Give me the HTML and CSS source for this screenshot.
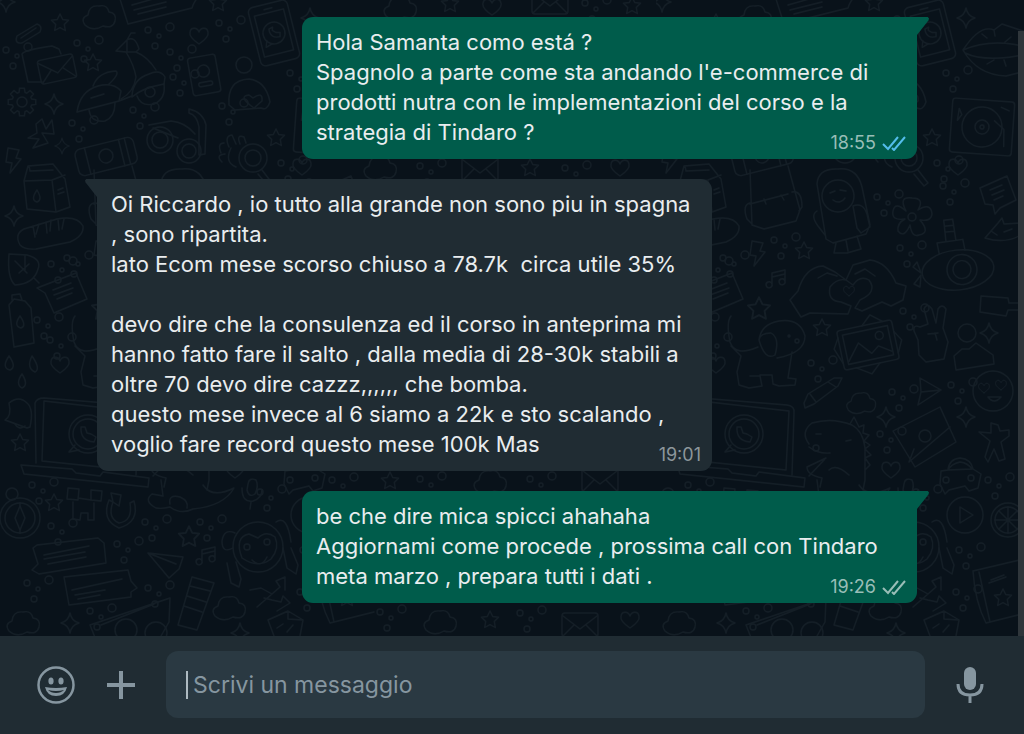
FILE: index.html
```html
<!DOCTYPE html>
<html lang="it">
  <head>
    <meta charset="UTF-8" />
    <meta name="viewport" content="width=device-width, initial-scale=1.0" />
    <title>Chat</title>
    <link rel="stylesheet" href="styles.css">
  </head>
  <body>
    <main class="chat">
      <svg class="wallpaper" aria-hidden="true">
        <defs>
          <path id="star" d="M0-9 2.700-3.500 8.500-2.800 4.300 1.500 5.300 7.500 0 4.700-5.300 7.500-4.300 1.500-8.500-2.800-2.700-3.500Z" />
          <path id="spark" d="M0-10Q1.500-2 9 0Q1.500 2 0 10Q-1.500 2-9 0Q-1.500-2 0-10Z" />
          <path id="heart" d="M0 8C-6 4-10 0-9-4C-8-9-2-9 0-4C2-9 8-9 9-4C10 0 6 4 0 8Z" />
          <path id="bolt" d="M-5-12 6-10 3-2 8-1-3 13-1 3-7 2Z" />
          <path id="note" d="M-6 6V-5L7-8V3M-6-1 7-4M-6 6a3 3 0 1 1-4-2q3-1 4 2M7 3a3 3 0 1 1-4-2q3-1 4 2" />
          <path id="cloud" d="M-14 8Q-19 1-11-2Q-10-12 0-11Q8-13 10-5Q18-4 16 4Q14 12 4 9Q-6 15-14 8Z" />
          <path id="gear" d="M13.800-2.400V2.400L9.600 3 8.800 4.700 11.500 8 8 11.500 4.700 8.800 3 9.600 2.400 13.800H-2.400L-3 9.600-4.700 8.800-8 11.500-11.500 8-8.800 4.700-9.600 3-13.800 2.400V-2.400L-9.600-3-8.800-4.700-11.500-8-8-11.500-4.700-8.800-3-9.600-2.400-13.800H2.400L3-9.600 4.700-8.800 8-11.500 11.500-8 8.800-4.700 9.600-3Z" />
          <g id="bubbles">
            <circle cx="0" cy="0" r="3" /><circle cx="11" cy="6" r="2" />
            <circle cx="22" cy="-3" r="4" /><circle cx="7" cy="16" r="3" />
          </g>
          <g id="letter"><rect x="-18" y="-12" width="36" height="24" rx="3" /><path d="M-17-9 0 4 17-9M-17 11-6 0M17 11 6 0" /></g>
          <pattern id="doodles" width="656" height="640" patternUnits="userSpaceOnUse">
            <g class="doodle">
              <!-- first row -->
              <use href="#spark" x="6" y="2" />
              <use href="#star" x="60" y="23" />
              <use href="#cloud" x="99" y="17" />
              <path d="M119-4 128 24 192 8Q195-2 202-5M132 5 160-3M134 10 166 2M138 14 166 7" />
              <use href="#star" x="218" y="3" />
              <path d="M17 36 37 24Q43 26 40 32L22 43Q14 44 17 36ZM21 38 36 28" />
              <path d="M42 82 28 82 22 54Q24 50 52 46L59 49 61 54" />
              <use href="#letter" transform="translate(57 69) rotate(-12)" />
              <use href="#star" x="93" y="63" />
              <path d="M77 112Q80 91 98 86Q113 82 121 91L119 101 77 112ZM93 86Q98 72 116 71Q120 74 108 85M91 98 104 94M121 99Q134 92 136 77 134 65 126 52L116 51 127 40 131 33 135 33M127 40Q135 35 139 49L136 52 127 52ZM136 52Q148 57 156 70M119 101 132 96Q133 79 149 74 160 69 165 77L164 84Q142 88 132 97" />
              <path d="M89 110Q91 123 105 121 115 117 115 103M137 96Q141 107 154 104 166 99 164 84" />
              <circle cx="150" cy="92" r="5" />
              <use href="#heart" x="199" y="36" />
              <g transform="translate(204 74) rotate(-10)"><rect x="-14" y="-18" width="28" height="38" rx="3" /><circle cy="-3" r="6" /><rect x="-7" y="8" width="14" height="4" rx="2" /></g>
              <g transform="translate(274 33) rotate(-14)"><rect x="-20" y="-30" width="40" height="60" rx="5" /><rect x="-15" y="-21" width="30" height="42" /><circle r="11" /><path d="M-9 6-11 12-4 10M-4-5Q-5 5 5 5L6 1 2 0-1-3 0-6ZM-4-25H4" /></g>
              <circle cx="244" cy="65" r="8" />
              <path d="M229 105Q227 80 249 79 266 81 270 102 267 111 261 108L235 110ZM254 108Q237 96 249 95L253 98Q263 91 262 101Z" />
              <use href="#spark" x="310" y="18" />
              <path d="M307 50Q324 24 338 30L346 24 370 32M307 50Q337 37 374 48M307 50Q321 75 350 76L374 70M309 53Q330 63 372 54M331 38 326 34M339 36 338 30M349 42 355 37M338 60 331 64M348 60 350 66" />
              <use href="#gear" x="22" y="102" />
              <circle cx="22" cy="102" r="5" />
              <use href="#spark" x="54" y="104" />
              <path d="M36 124 42 119 46 129 52 120 54 134 42 133 48 143 33 148 39 139 28 138 37 133Z" />
              <use href="#spark" transform="translate(62 146) scale(.8)" />
              <g transform="translate(106 156) rotate(-14)"><rect x="-30" y="-13" width="60" height="27" rx="6" /><circle r="7" /><path d="M-19-13V14M16-13V14M22-13V14" /></g>
              <circle cx="160" cy="140" r="13" /><circle cx="160" cy="140" r="8" />
              <circle cx="189" cy="151" r="12" /><circle cx="189" cy="151" r="7" />
              <path d="M149 125 171 121Q185 122 195 134M153 128 178 138M189 109Q203 112 206 125L205 154 199 155V127Q197 115 189 113Z" />
              <circle cx="253" cy="158" r="14" /><circle cx="253" cy="158" r="8" />
              <path d="M262 170 272 183 268 186 258 174M231 148Q224 162 236 167M221 153Q217 143 224 143M229 147Q224 136 232 135L236 144M240 144Q236 134 244 137L246 143M222 162Q215 155 225 154" />
              <use href="#star" x="276" y="138" />
              <g transform="translate(326 127) rotate(4)"><rect x="-31" y="-27" width="62" height="54" rx="3" /><circle r="20" /><circle r="7" /><circle r="2" /><path d="M12-7 22 1 23 18M-24-17-21-11-25-5ZM18-21 26-18" /></g>
              <!-- second row -->
              <use href="#bolt" x="13" y="160" />
              <path d="M24 181 28 166 53 164 65 179 70 207 56 212 27 209ZM24 181 52 180 65 175M52 180 56 212M29 166 30 171 53 170M37 190Q30 200 37 202 43 200 37 190M58 190 63 188M58 194 64 192" />
              <use href="#spark" x="14" y="216" />
              <path d="M20 245Q14 234 24 229L57 219Q77 215 83 226 84 236 70 242L36 249Q25 250 20 245ZM33 226 35 237M39 224 36 234M46 222 47 233M51 220 50 231M58 219 59 230M64 219 62 229" />
              <path d="M94 170 96 225 108 229 140 221 144 210 132 166M94 204 132 194M108 199 110 204M125 195 128 200M94 203Q86 205 91 219L96 224M136 192Q146 190 146 207L143 211" />
              <path d="M170 239 161 184Q162 168 182 169 201 167 206 187L214 225 210 234 177 243ZM161 211Q154 215 162 226L169 235M197 206Q207 202 211 214L214 227 205 233 201 228ZM180 243 178 253 191 253 205 249 201 236M190 240 192 251" />
              <circle cx="182" cy="196" r="16" />
              <path d="M174 193 179 191M184 190 190 191M177 200Q184 205 189 198" />
              <path d="M250 211Q242 196 256 198 269 198 262 210 275 202 276 214 275 222 264 220 275 233 263 235 256 238 254 225 248 239 242 231 241 223 249 219 235 221 237 211 239 201 250 211" />
              <circle cx="256" cy="217" r="4" />
              <use href="#heart" x="302" y="167" />
              <path d="M324 188 351 176 360 200 344 208 339 214 337 205 329 204ZM334 190 346 185M336 195 348 190M338 200 347 196" />
              <path d="M329 238 342 223 346 218 348 224 365 223M329 238Q348 244 363 236M335 231 341 235M348 232 356 229" />
              <g transform="translate(302 270) rotate(-6)"><ellipse rx="36" ry="20" /><circle cx="4" r="15" /><circle cx="4" r="9" /><path d="M-17-18-18-29 8-30 9-19M-9-30-9-51 0-51 1-30M-9-45H0M-9-39H0" /></g>
              <path d="M265 273 257 267 261 262ZM265 275 258 284 264 287Z" />
              <path d="M9 254 27 255Q42 259 38 269 34 284 15 285 7 278 9 254ZM15 261 27 273M19 273 29 264M34 278 39 283M25 255 25 270" />
              <path d="M37 288 76 273 87 299 54 313 45 293ZM53 290 71 283M54 295 73 288M57 299 72 293" />
              <use href="#bolt" x="101" y="253" />
              <use href="#star" x="148" y="251" />
              <use href="#note" x="122" y="278" />
              <path d="M145 317 134 300 142 291Q149 267 167 266L179 272 190 280 197 265 214 260Q231 262 240 283L250 286 247 300 235 306 226 302 206 311 199 308 204 300Q222 292 213 280 204 275 197 285L190 280Q181 278 174 287 171 301 185 302L195 306 192 314 154 313ZM162 278 171 273 181 276M199 274 209 269 219 276" />
              <use href="#heart" transform="translate(193 291) scale(.6)" />
              <use href="#star" transform="translate(103 309) scale(1.300)" />
              <use href="#star" x="166" y="328" />
              <path d="M9 305 14 299 25 301 31 308 34 343 14 347ZM12 300 12 295 20 294 22 300M20 316Q13 326 21 328 27 326 20 316" />
              <path d="M9 356Q1 368 10 370 17 367 9 356M32 356Q26 368 35 372 41 369 32 356M22 374Q15 384 22 388 29 385 22 374" />
              <use href="#heart" x="60" y="365" />
              <path d="M75 316Q70 322 74 342 79 357 102 347M75 346 85 356 81 372 83 385 93 388 106 386 104 376 94 376M104 375 116 375 117 384 123 386 139 385 140 379 132 378 136 352M103 340Q105 324 123 321 144 318 149 336 149 353 121 358M103 340Q104 333 115 333 124 338 119 355 109 361 103 340" />
              <circle cx="133" cy="336" r="1" /><circle cx="141" cy="341" r="2" />
              <g transform="translate(212 345) rotate(-12)"><rect x="-28" y="-20" width="56" height="40" rx="3" /><rect x="-23" y="-15" width="46" height="30" /><circle cx="13" cy="-7" r="4" /><path d="M-22 12-9-4 2 9 10 3 22 11M-2-20 8-29 19-20M-28-13-34-3-28 13M28-8 34 2 28 14M-16 20-2 29 8 20" /></g>
              <path d="M262 340 258 331Q257 324 264 327L272 324 268 309Q271 302 276 309L280 323 282 309Q286 303 290 309L287 328 292 342 288 359 270 362 263 355ZM272 334 282 333M281 340 279 333" />
              <circle cx="311" cy="333" r="9" />
              <path d="M300 370 298 356 306 349 313 349 320 343 337 355 338 364Z" />
              <path d="M325 296 352 298 353 303 365 303M324 312 350 316 352 310 365 310M325 296 324 312" />
              <use href="#spark" x="333" y="333" />
              <circle cx="337" cy="391" r="20" />
              <use href="#heart" transform="translate(328 388) scale(.6)" /><use href="#heart" transform="translate(345 385) scale(.6)" />
              <path d="M332 397Q338 405 345 397Z" />
              <!-- third row -->
              <path d="M264 378 285 390 262 405 265 392ZM265 392 285 390M148 403 152 394 178 378 186 378 182 386 158 404 149 408ZM154 394 160 402M172 382 180 387" />
              <use href="#cloud" transform="translate(205 403) scale(.9)" />
              <path d="M5 420Q12 416 9 403 19 395 27 403 34 409 30 427L27 428ZM14 423Q19 431 25 426" />
              <use href="#star" x="20" y="443" />
              <path d="M36 463 35 403Q37 398 44 398L131 405Q139 406 138 413L136 475M44 401 42 461 130 470 133 411ZM21 465 72 469 76 473 100 476 103 472 149 478 148 487 24 474Z" />
              <circle cx="88" cy="434" r="19" /><circle cx="88" cy="434" r="15" />
              <path d="M75 445 69 452 79 450M81 427Q80 441 94 442L96 437 91 434 87 433 85 427Z" />
              <path d="M153 444Q144 432 156 423 176 417 196 425 207 431 209 448L209 480 207 490M153 447Q162 454 174 453M170 458 151 467Q151 475 166 478L164 487M173 470Q180 463 193 475M153 476 169 459M194 424 198 417 203 427 208 425 207 433 213 435 208 441 214 445 209 449 215 455 209 458 214 465 209 470M160 434 165 434M190 441 195 440" />
              <circle cx="160" cy="448" r="3" />
              <path d="M237 431 284 407 300 442 259 467ZM253 462 294 427M258 449 253 462" />
              <circle cx="269" cy="436" r="6" />
              <use href="#spark" x="230" y="417" /><use href="#spark" x="310" y="417" />
              <path d="M323 432 335 433 335 423 342 425 344 431 353 430 353 436 345 442 349 459 343 461 338 449 332 462 329 457 334 441Z" />
              <use href="#heart" x="235" y="470" />
              <path d="M284 484 285 471 292 470Q293 459 304 458 315 459 317 469L325 474 322 488 313 491 309 486 293 490 289 494ZM292 470 316 469M292 470Q295 464 304 462 312 463 316 469" />
              <circle cx="290" cy="480" r="3" /><circle cx="315" cy="478" r="3" />
              <circle cx="309" cy="515" r="18" /><path d="M304 507 317 515 304 523Z" />
              <circle cx="352" cy="520" r="17" /><circle cx="352" cy="520" r="13" /><path d="M352 507V533M339 520H365M343 511 361 529M361 511 343 529" />
              <circle cx="20" cy="518" r="20" /><circle cx="20" cy="518" r="15" /><circle cx="12" cy="494" r="6" />
              <path d="M20 506 25 518 20 530 15 518ZM20 503V506M20 533V530" />
              <use href="#star" x="54" y="503" />
              <path d="M68 488 79 489 78 500 67 499ZM91 490 102 491 101 501 91 500ZM78 498 91 500M73 502 73 519 80 520 81 513 88 513 88 520 94 520 94 503" />
              <path d="M109 500Q101 520 119 528 140 522 134 501L130 503Q133 521 119 523 107 518 113 502ZM113 502 119 506 121 495 111 493Z" />
              <path d="M156 508Q143 501 152 494L163 496 161 480M170 504Q168 494 180 497 189 501 187 508M156 508Q162 509 170 507 181 515 193 509 224 506 234 488 212 499 203 485" />
              <path d="M248 484Q249 477 256 480 259 486 255 494 249 498 247 490ZM242 488Q242 503 253 501 262 498 262 490M251 502 250 509" />
              <path d="M33 548 37 545 98 538 104 543 106 563 39 574 32 570 38 564ZM44 555 89 546M44 559 85 552M48 564 86 557M64 577 128 570 131 581 137 588 131 592 131 597 69 605ZM72 590 122 579M75 595 105 590M78 599 100 595" />
              <path d="M148 553 183 557 179 569 169 578ZM148 553 176 564" />
              <use href="#star" transform="translate(189 537) scale(1.200)" />
              <use href="#note" x="208" y="555" />
              <circle cx="258" cy="547" r="25" />
              <path d="M242 558Q234 537 249 534L258 538Q266 530 275 537 280 548 271 559 258 569 242 558ZM252 560Q261 569 267 557" />
              <circle cx="247" cy="547" r="3" /><circle cx="267" cy="542" r="3" />
              <path d="M233 548Q222 554 222 541 224 528 235 533M227 563 231 583 239 587 241 579 236 562M276 522Q287 514 291 542M283 548 287 568 296 574 298 565 291 548" />
              <path d="M192 577 214 583 197 630 178 625ZM190 586 210 591M187 596 206 602M184 606 202 612" />
              <path d="M250 590 261 588 272 594 280 587 276 581 285 577 285 590M272 594 257 607M264 598 272 600 281 602 283 596 290 603 277 611" />
              <use href="#cloud" x="229" y="608" /><use href="#cloud" x="23" y="623" />
              <path d="M90 625 170 598 169 622 161 636M90 625 96 640M101 625 154 604" />
              <circle cx="126" cy="630" r="11" /><circle cx="156" cy="633" r="11" />
              <use href="#spark" x="70" y="623" /><use href="#spark" x="240" y="633" />
              <path d="M268 620 288 611 303 620 300 636M274 636 268 620M288 611 288 619 303 620M277 628 283 624M287 632 293 625" />
              <path d="M317 571 372 558M317 571Q319 602 330 623L374 612M323 572 334 622M333 583 350 577M335 580 348 575" />
              <use href="#star" x="347" y="598" />
              <!-- little rings between the drawings -->
              <use href="#bubbles" x="6" y="50" /><use href="#bubbles" x="77" y="43" /><use href="#bubbles" x="148" y="30" />
              <use href="#bubbles" x="170" y="52" /><use href="#bubbles" x="219" y="23" /><use href="#bubbles" x="173" y="77" />
              <use href="#bubbles" x="222" y="106" /><use href="#bubbles" x="72" y="123" /><use href="#bubbles" x="133" y="110" />
              <use href="#bubbles" x="290" y="73" /><use href="#bubbles" x="281" y="163" />
              <use href="#bubbles" x="221" y="197" /><use href="#bubbles" x="287" y="186" />
              <use href="#bubbles" x="51" y="264" /><use href="#bubbles" x="67" y="258" /><use href="#bubbles" x="118" y="240" />
              <use href="#bubbles" x="244" y="248" /><use href="#bubbles" x="37" y="320" /><use href="#bubbles" x="50" y="340" />
              <use href="#bubbles" x="155" y="363" /><use href="#bubbles" x="236" y="392" /><use href="#bubbles" x="295" y="385" />
              <use href="#bubbles" x="247" y="311" /><use href="#bubbles" x="224" y="434" />
              <use href="#bubbles" x="32" y="485" /><use href="#bubbles" x="51" y="526" /><use href="#bubbles" x="117" y="544" />
              <use href="#bubbles" x="145" y="522" /><use href="#bubbles" x="200" y="522" /><use href="#bubbles" x="260" y="492" />
              <use href="#bubbles" x="27" y="583" /><use href="#bubbles" x="90" y="611" /><use href="#bubbles" x="148" y="588" />
              <use href="#bubbles" x="303" y="550" /><use href="#bubbles" x="300" y="592" /><use href="#bubbles" x="332" y="480" />
              <!-- strip seen between the messages -->
              <use href="#cloud" x="400" y="8" /><use href="#star" x="450" y="4" /><use href="#heart" x="492" y="7" />
              <use href="#letter" x="550" y="2" /><use href="#bubbles" x="585" y="3" /><use href="#star" x="632" y="6" />
              <use href="#cloud" x="380" y="168" /><use href="#bubbles" x="420" y="166" /><use href="#letter" x="480" y="169" />
              <use href="#star" x="530" y="168" /><use href="#bubbles" x="565" y="168" /><use href="#heart" x="620" y="168" />
              <use href="#star" x="390" y="481" /><use href="#bubbles" x="420" y="479" /><use href="#cloud" x="490" y="482" />
              <use href="#bubbles" x="530" y="479" /><use href="#letter" x="600" y="480" />
              <use href="#bubbles" x="380" y="612" /><use href="#cloud" x="440" y="622" /><use href="#star" x="490" y="620" />
              <use href="#bubbles" x="520" y="613" /><use href="#letter" x="580" y="625" /><use href="#heart" x="630" y="620" />
            </g>
          </pattern>
        </defs>
        <rect width="100%" height="100%" fill="url(#doodles)" />
      </svg>

      <div class="messages">
        <div class="message out">
          <p>Hola Samanta como está ?<br>Spagnolo a parte come sta andando l'e-commerce di<br>prodotti nutra con le implementazioni del corso e la<br>strategia di Tindaro ?</p>
          <div class="meta">
            <time>18:55</time>
            <svg class="ticks read" viewBox="0 0 24 16" aria-label="Letto"><path d="M1 9 6 14 16 2M10 13 12 15 23 2" /></svg>
          </div>
        </div>

        <div class="message in">
          <p>Oi Riccardo , io tutto alla grande non sono piu in spagna<br>, sono ripartita.<br>lato Ecom mese scorso chiuso a 78.7k&nbsp; circa utile 35%<br><br>devo dire che la consulenza ed il corso in anteprima mi<br>hanno fatto fare il salto , dalla media di 28-30k stabili a<br>oltre 70 devo dire cazzz,,,,,, che bomba.<br>questo mese invece al 6 siamo a 22k e sto scalando ,<br>voglio fare record questo mese 100k Mas</p>
          <div class="meta">
            <time>19:01</time>
          </div>
        </div>

        <div class="message out">
          <p>be che dire mica spicci ahahaha<br>Aggiornami come procede , prossima call con Tindaro<br>meta marzo , prepara tutti i dati .</p>
          <div class="meta">
            <time>19:26</time>
            <svg class="ticks" viewBox="0 0 24 16" aria-label="Consegnato"><path d="M1 9 6 14 16 2M10 13 12 15 23 2" /></svg>
          </div>
        </div>
      </div>
      <div class="scrollbar"></div>
    </main>

    <footer class="composer">
      <button class="icon-button" type="button" aria-label="Emoji">
        <svg width="40" height="40" viewBox="0 0 40 40">
          <circle cx="20" cy="20" r="17.500" fill="none" stroke="currentColor" stroke-width="2.500" />
          <ellipse cx="15" cy="16" rx="2.600" ry="3.600" fill="currentColor" />
          <ellipse cx="25" cy="16" rx="2.600" ry="3.600" fill="currentColor" />
          <path d="M9 22Q20 24 31 22Q29 31 20 31Q11 31 9 22Z" fill="currentColor" />
          <path d="M12 25Q20 27 28 25Q25 28 20 28Q15 28 12 25Z" fill="#202c33" />
        </svg>
      </button>
      <button class="icon-button" type="button" aria-label="Allega">
        <svg width="28" height="28" viewBox="0 0 28 28"><path d="M14 0V28M0 14H28" fill="none" stroke="currentColor" stroke-width="4" /></svg>
      </button>
      <label class="field">
        <span class="caret"></span>
        <input type="text" placeholder="Scrivi un messaggio" aria-label="Scrivi un messaggio" />
      </label>
      <button class="icon-button mic" type="button" aria-label="Messaggio vocale">
        <svg width="28" height="36" viewBox="0 0 28 36">
          <rect x="8" y="0" width="12" height="23" rx="6" fill="currentColor" />
          <path d="M2 17Q2 28 14 28Q26 28 26 17M14 28V36" fill="none" stroke="currentColor" stroke-width="3" />
        </svg>
      </button>
    </footer>
  </body>
</html>
```
FILE: styles.css
```css
* {
  box-sizing: border-box;
}

body {
  margin: 0;
  min-height: 100vh;
  display: flex;
  flex-direction: column;
  background-color: #09121a;
  font-family: Inter, "Liberation Sans", sans-serif;
  color: #e9edef;
}

.chat {
  position: relative;
  flex: 1;
  display: flex;
  flex-direction: column;
  justify-content: flex-end;
  overflow: hidden;
}

.wallpaper {
  position: absolute;
  top: 0;
  left: 0;
  width: 100%;
  height: 100%;
}

.doodle {
  fill: none;
  stroke: #141e26;
  stroke-width: 1.4;
  stroke-linejoin: round;
  stroke-linecap: round;
}

.messages {
  position: relative;
  display: flex;
  flex-direction: column;
  gap: 20px;
  padding: 16px 107px 33px 97px;
}

.message {
  position: relative;
  width: 75%;
  padding: 10px 14px 12px;
  border-radius: 11px;
  font-size: 22px;
  line-height: 30px;
}

.message p {
  margin: 0;
  white-space: nowrap;
}

.message::before {
  content: "";
  position: absolute;
  top: 0;
  width: 12px;
  height: 18px;
  background-color: inherit;
}

.out {
  align-self: flex-end;
  background-color: #005c4b;
  border-top-right-radius: 0;
}

.out::before {
  left: 100%;
  clip-path: polygon(0 0, 90% 0, 100% 8%, 95% 20%, 0 100%);
}

.in {
  background-color: #202c33;
  border-top-left-radius: 0;
}

.in::before {
  right: 100%;
  clip-path: polygon(100% 0, 10% 0, 0 8%, 5% 20%, 100% 100%);
}

.meta {
  position: absolute;
  right: 11px;
  bottom: 6px;
  display: flex;
  align-items: center;
  gap: 6px;
  font-size: 18px;
  line-height: 20px;
  color: #99beb7;
}

.in .meta {
  color: #8d969b;
}

.ticks {
  width: 24px;
  height: 16px;
  fill: none;
  stroke: currentColor;
  stroke-width: 2;
}

.read {
  stroke: #53bdeb;
}

.scrollbar {
  position: absolute;
  top: 31px;
  right: 0;
  bottom: 0;
  width: 6px;
  background-color: #2f363b;
}

.composer {
  display: flex;
  align-items: center;
  padding: 15px 40px 16px 36px;
  background-color: #202c33;
  color: #8696a0;
}

.icon-button {
  display: flex;
  margin-right: 31px;
  padding: 0;
  border: none;
  background: none;
  color: inherit;
  cursor: pointer;
}

.mic {
  margin: 0 0 0 31px;
}

.field {
  flex: 1;
  display: flex;
  align-items: center;
  gap: 5px;
  height: 67px;
  padding: 0 20px;
  border-radius: 12px;
  background-color: #2a3942;
}

.caret {
  width: 2px;
  height: 28px;
  background-color: #aebac1;
}

.field input {
  flex: 1;
  min-width: 0;
  padding: 0;
  border: none;
  outline: none;
  background: none;
  color: #e9edef;
  font-family: inherit;
  font-size: 23px;
}

.field input::placeholder {
  color: #8696a0;
  opacity: 1;
}
```
